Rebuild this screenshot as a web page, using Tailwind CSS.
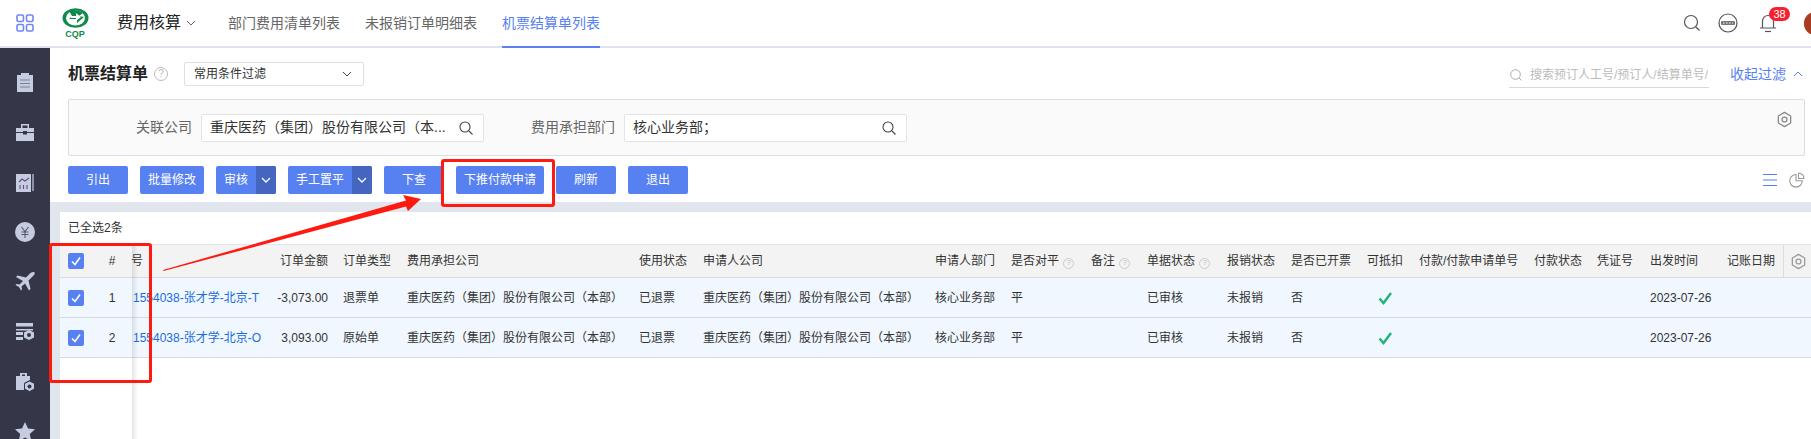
<!DOCTYPE html>
<html lang="zh-CN">
<head>
<meta charset="UTF-8">
<title>机票结算单</title>
<script src="https://cdn.jsdelivr.net/npm/@tailwindcss/browser@4"></script>
</head>
<body class="relative h-[439px] w-[1811px] overflow-hidden bg-white text-[12px] text-[#333] font-['Liberation_Sans','Noto_Sans_CJK_SC',sans-serif]">

<!-- top bar -->
<header class="flex h-[48px] items-center border-b-2 border-[#e0e2ec] bg-white">
  <svg class="ml-[16px] h-[18px] w-[18px]" viewBox="0 0 18 18" fill="none" stroke="#6f86f5" stroke-width="1.6">
    <rect x="1" y="1" width="6.5" height="6.5" rx="1.5"/><rect x="10.5" y="1" width="6.5" height="6.5" rx="1.5"/>
    <rect x="1" y="10.5" width="6.5" height="6.5" rx="1.5"/><rect x="10.5" y="10.5" width="6.5" height="6.5" rx="1.5"/>
  </svg>
  <div class="ml-[27px] flex w-[28px] flex-col items-center">
    <svg class="h-[20px] w-[27px]" viewBox="0 0 27 20">
      <ellipse cx="13.5" cy="10" rx="13" ry="9.8" fill="#0f8a4b"/>
      <ellipse cx="13.5" cy="10" rx="9.5" ry="7.4" fill="#fff"/>
      <path d="M7 3 Q14 0 21 5 L17 8 L22 9 L15 15 L15 11 L7 11 L10 8 Z" fill="#0f8a4b"/>
      <path d="M9 8h5v-3l5 4-5 4v-3H9z" fill="#fff"/>
    </svg>
    <span class="mt-[2px] text-[9px] leading-[8px] font-bold text-[#0f8a4b]">CQP</span>
  </div>
  <span class="ml-[28px] text-[16px] text-[#222]">费用核算</span>
  <svg class="ml-[5px] h-[10px] w-[10px]" viewBox="0 0 10 10" fill="none" stroke="#666" stroke-width="1"><path d="M1 3l4 4 4-4"/></svg>
  <nav class="ml-[32px] flex h-full gap-[25px] text-[14px] text-[#666]">
    <a class="flex items-center">部门费用清单列表</a>
    <a class="flex items-center">未报销订单明细表</a>
    <a class="flex items-center border-b-2 border-[#5781f0] text-[#5781f0] mb-[-2px]">机票结算单列表</a>
  </nav>
  <div class="ml-auto flex items-center">
    <svg class="h-[18px] w-[18px]" viewBox="0 0 18 18" fill="none" stroke="#555" stroke-width="1.2"><circle cx="8" cy="8" r="6.5"/><path d="M13 13l3.5 3.5"/></svg>
    <svg class="ml-[17px] h-[20px] w-[20px]" viewBox="0 0 20 20" fill="none" stroke="#555" stroke-width="1.2"><circle cx="10" cy="10" r="9"/><rect x="3" y="8" width="14" height="4" rx="1" fill="#777" stroke="none"/><path d="M5 10h10" stroke="#fff" stroke-dasharray="1.5 1.5"/></svg>
    <div class="relative ml-[20px] h-[20px] w-[20px]">
      <svg class="h-[20px] w-[20px]" viewBox="0 0 20 20" fill="none" stroke="#555" stroke-width="1.2"><path d="M2 15h16M4.500 15V8a5.500 5.500 0 0 1 11 0v7"/><path d="M7 18.500h6"/></svg>
      <span class="absolute left-[11px] top-[-6px] flex h-[14px] w-[21px] items-center justify-center rounded-full bg-[#f5222d] text-[11px] text-white">38</span>
    </div>
    <span class="ml-[26px] mr-[-15px] h-[23px] w-[22px] rounded-full bg-[#a83c20]"></span>
  </div>
</header>

<div class="flex h-[391px]">
  <!-- side menu -->
  <aside class="flex w-[50px] shrink-0 flex-col items-center gap-[30px] bg-[#353749] pt-[24px]">
    <svg class="h-[20px] w-[20px] shrink-0" viewBox="0 0 20 20"><path d="M2 3h4V1h8v2h4v17H2z" fill="#c6cce0"/><path d="M5 8h10M5 11.500h10M5 15h10" stroke="#7d8197" stroke-width="1.200"/></svg>
    <svg class="h-[20px] w-[20px] shrink-0" viewBox="0 0 20 20"><path d="M1 6h5V2h8v4h5v13H1z" fill="#c6cce0"/><path d="M7.500 6V3.500h5V6z" fill="#353749"/><path d="M1 10.500h18" stroke="#353749"/><rect x="8" y="9" width="4" height="3.500" fill="#353749"/></svg>
    <svg class="h-[20px] w-[20px] shrink-0" viewBox="0 0 20 20"><path d="M1 2h15v18H1z" fill="#c6cce0"/><path d="M17 2h2v17h-2z" fill="#8c90a8"/><path d="M4 10l3-3 3 2 4-3M5 17v-4M8.500 17v-4M12 17v-4" stroke="#6a4a86" stroke-width="1.100" fill="none"/></svg>
    <svg class="h-[20px] w-[20px] shrink-0" viewBox="0 0 20 20"><circle cx="10" cy="10" r="10" fill="#c6cce0"/><path d="M6.500 5l3.500 4.500L13.500 5M6.500 10h7M6.500 12.500h7M10 9.500V16" stroke="#555a70" stroke-width="1.100" fill="none"/></svg>
    <svg class="h-[20px] w-[20px] shrink-0" viewBox="0 0 20 20"><path d="M19.500.5c-1.500-1-3.500 0-5 1.500L11 5.500 2.500 3.500 1 5l7 4-3.500 3.500-3-.5-1 1 3.500 2 2 3.500 1-1-.5-3L10 11.500l4 7 1.500-1.500L13.500 8.500 17 5c1.500-1.500 3.500-3.500 2.500-4.500z" fill="#c6cce0"/></svg>
    <svg class="h-[20px] w-[20px] shrink-0" viewBox="0 0 20 20"><path d="M1 1h17v3.500H1zM1 7h17v1.500H1zM1 10h7v3H1zM1 15h7v3H1z" fill="#c6cce0"/><path d="M14 8l5 2.500v5L14 18l-5-2.500v-5z" fill="#c6cce0"/><circle cx="14" cy="13" r="2" fill="#353749"/></svg>
    <svg class="h-[20px] w-[20px] shrink-0" viewBox="0 0 20 20"><path d="M1 4h4V1h7v3h3v4L9 11v7H1zM7 2.500v1.500h3V2.500z" fill="#c6cce0"/><path d="M14.500 9l5 2.500v5.500l-5 2.500-5-2.500v-5.500z" fill="#c6cce0" stroke="#353749"/><circle cx="14.500" cy="14.500" r="2" fill="#353749"/></svg>
    <svg class="h-[20px] w-[20px] shrink-0" viewBox="0 0 20 20"><path d="M10 0l3 6.500 7 .8-5.200 4.700 1.400 7L10 15.500 3.800 19l1.400-7L0 7.300l7-.8z" fill="#c6cce0"/></svg>
  </aside>

  <main class="flex min-w-0 flex-1 flex-col">
    <!-- title + filters + toolbar -->
    <section class="bg-white pl-[18px] pr-[6px] pt-[14px] pb-[8px] h-[154px] shrink-0">
      <div class="flex h-[24px] items-center">
        <h1 class="text-[16px] font-bold text-[#222]">机票结算单</h1>
        <span class="ml-[6px] flex h-[14px] w-[14px] items-center justify-center rounded-full border border-[#bbb] text-[10px] leading-none text-[#bbb]">?</span>
        <div class="ml-[16px] flex h-[24px] w-[180px] items-center justify-between rounded-[2px] border border-[#e0e0e0] pl-[9px] pr-[11px] text-[#333]">
          常用条件过滤
          <svg class="h-[10px] w-[10px]" viewBox="0 0 10 10" fill="none" stroke="#444" stroke-width="1"><path d="M1 3l4 4 4-4"/></svg>
        </div>
        <div class="ml-auto flex h-[26px] w-[200px] items-center gap-[8px] self-end overflow-hidden whitespace-nowrap border-b border-[#d9d9d9] pl-[1px] text-[#bbb] mb-[-2px]">
          <svg class="h-[12px] w-[12px] shrink-0" viewBox="0 0 12 12" fill="none" stroke="#aaa" stroke-width="1"><circle cx="5.500" cy="5.500" r="4.800"/><path d="M9 9l2.500 2.500"/></svg>
          <span class="overflow-hidden">搜索预订人工号/预订人/结算单号/</span>
        </div>
        <span class="ml-[21px] text-[14px] text-[#5781f0]">收起过滤</span>
        <svg class="ml-[7px] mr-[2px] h-[10px] w-[10px]" viewBox="0 0 10 10" fill="none" stroke="#5781f0" stroke-width="1"><path d="M1 7l4-4 4 4"/></svg>
      </div>

      <div class="mt-[13px] flex h-[57px] items-center rounded-[2px] border border-[#ddd] bg-[#fafafa] pl-[67px] text-[14px]">
        <label class="text-[#666]">关联公司</label>
        <div class="ml-[9px] flex h-[28px] w-[283px] items-center justify-between rounded-[2px] border border-[#e4e4e4] bg-white pl-[8px] pr-[10px]">
          <span class="whitespace-nowrap">重庆医药（集团）股份有限公司（本...</span>
          <svg class="h-[14px] w-[14px] shrink-0" viewBox="0 0 14 14" fill="none" stroke="#444" stroke-width="1.100"><circle cx="6" cy="6" r="5"/><path d="M10 10l3.500 3.500"/></svg>
        </div>
        <label class="ml-[47px] text-[#666]">费用承担部门</label>
        <div class="ml-[9px] flex h-[28px] w-[283px] items-center justify-between rounded-[2px] border border-[#e4e4e4] bg-white pl-[8px] pr-[10px]">
          <span class="[text-spacing-trim:space-all]">核心业务部；</span>
          <svg class="h-[14px] w-[14px] shrink-0" viewBox="0 0 14 14" fill="none" stroke="#444" stroke-width="1.100"><circle cx="6" cy="6" r="5"/><path d="M10 10l3.500 3.500"/></svg>
        </div>
        <svg class="ml-auto mr-[11px] mb-[17px] h-[17px] w-[17px]" viewBox="0 0 24 24" fill="none" stroke="#888" stroke-width="1.800"><path d="M12 2l8.700 5v10L12 22l-8.700-5V7z" stroke-linejoin="round"/><circle cx="12" cy="12" r="3.500"/></svg>
      </div>

      <div class="mt-[10px] flex h-[28px] items-center gap-[12px] text-white">
        <button class="h-[28px] w-[60px] rounded-[2px] bg-[#5781f0]">引出</button>
        <button class="h-[28px] w-[64px] rounded-[2px] bg-[#5781f0]">批量修改</button>
        <div class="flex h-[28px] w-[60px] overflow-hidden rounded-[2px] bg-[#5781f0]">
          <span class="flex w-[40px] items-center justify-center">审核</span>
          <span class="flex w-[20px] items-center justify-center bg-[#4566bf]"><svg class="h-[10px] w-[10px]" viewBox="0 0 10 10" fill="none" stroke="#fff" stroke-width="1.300"><path d="M1 3l4 4 4-4"/></svg></span>
        </div>
        <div class="flex h-[28px] w-[84px] overflow-hidden rounded-[2px] bg-[#5781f0]">
          <span class="flex w-[64px] items-center justify-center">手工置平</span>
          <span class="flex w-[20px] items-center justify-center bg-[#4566bf]"><svg class="h-[10px] w-[10px]" viewBox="0 0 10 10" fill="none" stroke="#fff" stroke-width="1.300"><path d="M1 3l4 4 4-4"/></svg></span>
        </div>
        <button class="h-[28px] w-[60px] rounded-[2px] bg-[#5781f0]">下查</button>
        <button class="h-[28px] w-[88px] rounded-[2px] bg-[#5781f0]">下推付款申请</button>
        <button class="h-[28px] w-[60px] rounded-[2px] bg-[#5781f0]">刷新</button>
        <button class="h-[28px] w-[60px] rounded-[2px] bg-[#5781f0]">退出</button>
        <svg class="ml-auto h-[14px] w-[14px]" viewBox="0 0 14 14" fill="none" stroke="#5781f0" stroke-width="1"><path d="M0 1.500h14M0 7h14M0 12.500h14"/></svg>
        <svg class="mr-[0px] h-[16px] w-[16px]" viewBox="0 0 16 16" fill="none" stroke="#999" stroke-width="1.100"><path d="M7 2.500a6.300 6.300 0 1 0 6.300 6.300H7z"/><path d="M9.500 1a6 6 0 0 1 5.500 5.500H9.500z"/></svg>
      </div>
    </section>

    <!-- grid -->
    <section class="flex-1 bg-[#e1e5ee] pl-[10px] pt-[10px]">
      <div class="relative h-full bg-white">
        <div class="flex h-[32px] items-center pl-[8px]">已全选2条</div>
        <table class="w-[1751px] table-fixed border-collapse">
          <colgroup>
            <col class="w-[32px]"><col class="w-[40px]"><col class="w-[137px]"><col class="w-[66px]"><col class="w-[64px]">
            <col class="w-[233px]"><col class="w-[63px]"><col class="w-[233px]"><col class="w-[75px]"><col class="w-[80px]">
            <col class="w-[56px]"><col class="w-[80px]"><col class="w-[65px]"><col class="w-[75px]"><col class="w-[52px]">
            <col class="w-[115px]"><col class="w-[64px]"><col class="w-[52px]"><col class="w-[77px]"><col class="w-[64px]"><col class="w-[28px]">
          </colgroup>
          <thead class="bg-[#f3f3f3] [&_th]:h-[33px] [&_th]:border-y [&_th]:border-[#e2e3e8] [&_th]:border-b-[#d8dae2] [&_th]:px-[8px] [&_th]:text-left [&_th]:font-normal [&_th]:whitespace-nowrap">
            <tr>
              <th><span class="flex h-[16px] w-[16px] items-center justify-center rounded-[2px] bg-[#5781f0]"><svg class="h-[10px] w-[10px]" viewBox="0 0 10 10" fill="none" stroke="#fff" stroke-width="1.600"><path d="M1 5.500l3 3 5-7"/></svg></span></th>
              <th class="!text-center">#</th>
              <th class="!pl-0"><span class="-ml-[1px]">号</span></th>
              <th class="!pl-0 !pr-[7px] !text-right">订单金额</th>
              <th>订单类型</th>
              <th>费用承担公司</th>
              <th class="!pl-[7px]">使用状态</th>
              <th>申请人公司</th>
              <th class="!pl-[7px]">申请人部门</th>
              <th>是否对平 <span class="ml-[1px] inline-flex h-[11px] w-[11px] items-center justify-center rounded-full border border-[#ccc] text-[8px] leading-none text-[#bbb]">?</span></th>
              <th>备注 <span class="ml-[1px] inline-flex h-[11px] w-[11px] items-center justify-center rounded-full border border-[#ccc] text-[8px] leading-none text-[#bbb]">?</span></th>
              <th>单据状态 <span class="ml-[1px] inline-flex h-[11px] w-[11px] items-center justify-center rounded-full border border-[#ccc] text-[8px] leading-none text-[#bbb]">?</span></th>
              <th>报销状态</th>
              <th class="!pl-[7px]">是否已开票</th>
              <th>可抵扣</th>
              <th>付款/付款申请单号</th>
              <th>付款状态</th>
              <th class="!pl-[7px]">凭证号</th>
              <th>出发时间</th>
              <th>记账日期</th>
              <th class="!border-l !border-l-[#ddd] !px-[6px]"><svg class="h-[17px] w-[17px]" viewBox="0 0 24 24" fill="none" stroke="#999" stroke-width="1.800"><path d="M12 2l8.700 5v10L12 22l-8.700-5V7z" stroke-linejoin="round"/><circle cx="12" cy="12" r="3.500"/></svg></th>
            </tr>
          </thead>
          <tbody class="bg-[#f0f7ff] [&_td]:h-[40px] [&_td]:border-b [&_td]:border-[#d8dae2] [&_td]:px-[8px] [&_td]:whitespace-nowrap">
            <tr>
              <td><span class="flex h-[16px] w-[16px] items-center justify-center rounded-[2px] bg-[#5781f0]"><svg class="h-[10px] w-[10px]" viewBox="0 0 10 10" fill="none" stroke="#fff" stroke-width="1.600"><path d="M1 5.500l3 3 5-7"/></svg></span></td>
              <td class="text-center">1</td>
              <td class="!pl-[1px] text-[#1a6ddb]">1554038-张才学-北京-T</td>
              <td class="!pl-0 !pr-[7px] text-right">-3,073.00</td>
              <td>退票单</td>
              <td>重庆医药（集团）股份有限公司（本部）</td>
              <td class="!pl-[7px]">已退票</td>
              <td>重庆医药（集团）股份有限公司（本部）</td>
              <td class="!pl-[7px]">核心业务部</td>
              <td>平</td>
              <td></td>
              <td>已审核</td>
              <td>未报销</td>
              <td class="!pl-[7px]">否</td>
              <td class="!px-0"><svg class="mx-auto h-[14px] w-[14px]" viewBox="0 0 14 14" fill="none" stroke="#1fb37a" stroke-width="2.400"><path d="M1.500 7.500l4 4.500L13 2"/></svg></td>
              <td></td>
              <td></td>
              <td></td>
              <td>2023-07-26</td>
              <td></td>
              <td></td>
            </tr>
            <tr>
              <td><span class="flex h-[16px] w-[16px] items-center justify-center rounded-[2px] bg-[#5781f0]"><svg class="h-[10px] w-[10px]" viewBox="0 0 10 10" fill="none" stroke="#fff" stroke-width="1.600"><path d="M1 5.500l3 3 5-7"/></svg></span></td>
              <td class="text-center">2</td>
              <td class="!pl-[1px] text-[#1a6ddb]">1554038-张才学-北京-O</td>
              <td class="!pl-0 !pr-[7px] text-right">3,093.00</td>
              <td>原始单</td>
              <td>重庆医药（集团）股份有限公司（本部）</td>
              <td class="!pl-[7px]">已退票</td>
              <td>重庆医药（集团）股份有限公司（本部）</td>
              <td class="!pl-[7px]">核心业务部</td>
              <td>平</td>
              <td></td>
              <td>已审核</td>
              <td>未报销</td>
              <td class="!pl-[7px]">否</td>
              <td class="!px-0"><svg class="mx-auto h-[14px] w-[14px]" viewBox="0 0 14 14" fill="none" stroke="#1fb37a" stroke-width="2.400"><path d="M1.500 7.500l4 4.500L13 2"/></svg></td>
              <td></td>
              <td></td>
              <td></td>
              <td>2023-07-26</td>
              <td></td>
              <td></td>
            </tr>
          </tbody>
        </table>
        <!-- shadow of the frozen columns -->
        <div class="pointer-events-none absolute bottom-0 left-[72px] top-[32px] w-[6px] bg-gradient-to-r from-black/10 to-transparent"></div>
      </div>
    </section>
  </main>
</div>

<!-- annotations drawn over the screenshot -->
<div class="pointer-events-none absolute left-[441px] top-[159px] h-[48px] w-[114px] rounded-[3px] border-[3px] border-[#ff1a10]"></div>
<div class="pointer-events-none absolute left-[49px] top-[243px] h-[140px] w-[103px] rounded-[3px] border-[3px] border-[#ff1a10]"></div>
<svg class="pointer-events-none absolute left-0 top-0 h-[439px] w-[1811px]" viewBox="0 0 1811 439">
  <path d="M163 270L406 200.500 403 195 421 199 408 211 406 206.500 163.500 271z" fill="#ff1a10"/>
</svg>
</body>
</html>
